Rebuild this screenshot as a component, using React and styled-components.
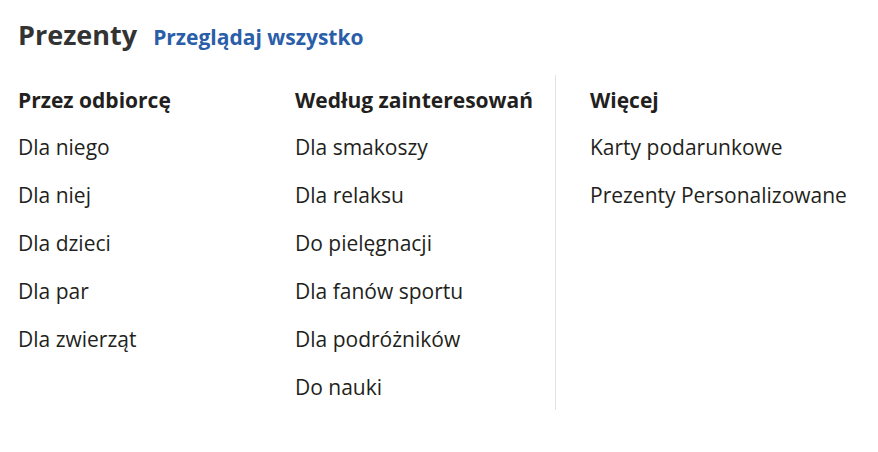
import React from "react";
import styled, { createGlobalStyle } from "styled-components";

const GlobalStyle = createGlobalStyle`
  body {
    margin: 0;
    background: #ffffff;
    font-family: "Open Sans", "Noto Sans", sans-serif;
  }
`;

const Wrapper = styled.div`
  padding: 17px 18px 0 18px;
`;

const Header = styled.div`
  display: flex;
  align-items: baseline;
  gap: 16px;
`;

const Title = styled.h2`
  margin: 0;
  font-size: 27px;
  line-height: 36px;
  font-weight: 700;
  color: #333333;
`;

const AllLink = styled.a`
  font-size: 21px;
  line-height: 36px;
  font-weight: 700;
  color: #2a5ea8;
  text-decoration: none;
`;

const Columns = styled.div`
  display: flex;
  margin-top: 20px;
`;

const Column = styled.div`
  flex: 0 0 ${(p) => p.width}px;
  padding: 9px 0 7px ${(p) => (p.divided ? 34 : 0)}px;
  border-left: ${(p) => (p.divided ? "1px solid #e3e3e3" : "none")};
`;

const Heading = styled.div`
  font-size: 21px;
  font-weight: 700;
  color: #231f20;
  line-height: 32px;
  margin-bottom: 15px;
`;

const Item = styled.a`
  display: block;
  font-size: 21px;
  color: #231f20;
  line-height: 32px;
  margin-bottom: 16px;
  text-decoration: none;

  &:last-child {
    margin-bottom: 0;
  }
`;

const columns = [
  {
    title: "Przez odbiorcę",
    width: 277,
    items: ["Dla niego", "Dla niej", "Dla dzieci", "Dla par", "Dla zwierząt"],
  },
  {
    title: "Według zainteresowań",
    width: 260,
    items: [
      "Dla smakoszy",
      "Dla relaksu",
      "Do pielęgnacji",
      "Dla fanów sportu",
      "Dla podróżników",
      "Do nauki",
    ],
  },
  {
    title: "Więcej",
    width: 300,
    divided: true,
    items: ["Karty podarunkowe", "Prezenty Personalizowane"],
  },
];

export default function App() {
  return (
    <>
      <GlobalStyle />
      <Wrapper>
        <Header>
          <Title>Prezenty</Title>
          <AllLink href="#">Przeglądaj wszystko</AllLink>
        </Header>
        <Columns>
          {columns.map((col) => (
            <Column key={col.title} width={col.width} divided={col.divided}>
              <Heading>{col.title}</Heading>
              {col.items.map((item) => (
                <Item key={item} href="#">
                  {item}
                </Item>
              ))}
            </Column>
          ))}
        </Columns>
      </Wrapper>
    </>
  );
}
